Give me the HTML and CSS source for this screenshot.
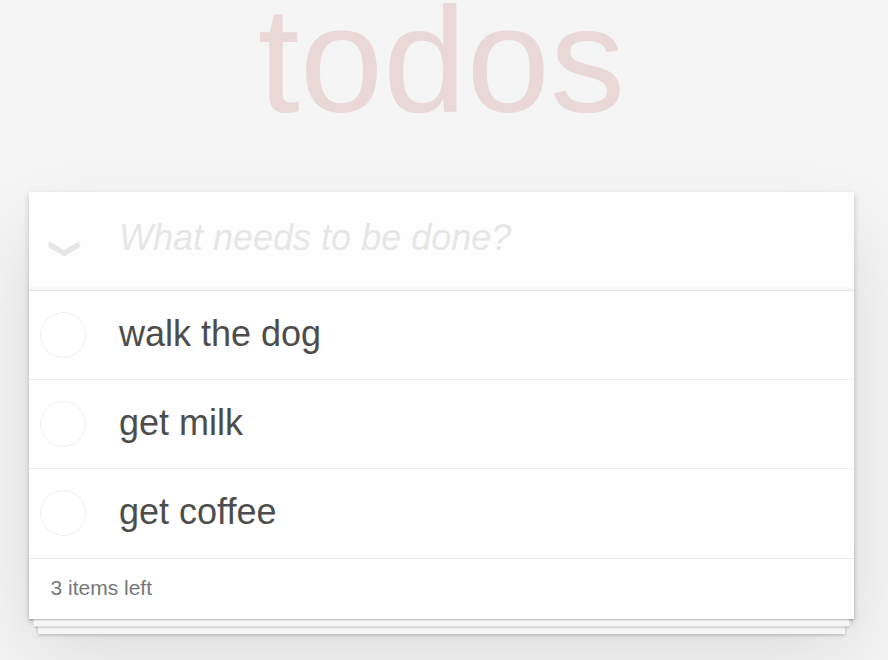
FILE: index.html
```html
<!DOCTYPE html>
<html lang="en">
<head>
<meta charset="utf-8">
<title>todos</title>
<link rel="stylesheet" href="styles.css">
</head>
<body>
<section class="todoapp">
  <header class="header">
    <h1 class="title">todos</h1>
    <div class="new-row">
      <input class="new-todo" placeholder="What needs to be done?">
      <label class="toggle-all"><span class="chev">❯</span></label>
    </div>
  </header>
  <section class="main">
    <ul class="todo-list">
      <li class="todo"><span class="toggle"></span><label class="todo-label">walk the dog</label></li>
      <li class="todo"><span class="toggle"></span><label class="todo-label">get milk</label></li>
      <li class="todo"><span class="toggle"></span><label class="todo-label">get coffee</label></li>
    </ul>
  </section>
  <footer class="footer">
    <span class="todo-count">3 items left</span>
  </footer>
</section>
</body>
</html>
```
FILE: styles.css
```css
html, body {
  margin: 0;
  padding: 0;
}
body {
  background: #f5f5f5;
  font-family: "Liberation Sans", Arial, sans-serif;
  font-size: 21px;
  line-height: 1.4em;
  color: #4d4d4d;
  font-weight: 300;
  -webkit-font-smoothing: antialiased;
}
.todoapp {
  width: 825px;
  margin: 192px 0 60px 29px;
  background: #fff;
  position: relative;
  box-shadow: 0 3px 6px rgba(0,0,0,0.2), 0 37px 75px rgba(0,0,0,0.1);
}
.header {
  position: relative;
}
.title {
  position: absolute;
  top: -192px;
  left: 0;
  width: 100%;
  margin: 0;
  font-size: 150px;
  line-height: 0.8;
  font-weight: 100;
  text-align: center;
  color: rgba(175,47,47,0.15);
  text-rendering: optimizeLegibility;
}
.new-row {
  position: relative;
}
.new-todo {
  display: block;
  box-sizing: border-box;
  width: 100%;
  margin: 0;
  font-family: inherit;
  font-size: 36px;
  line-height: 1.4em;
  height: 98px;
  padding: 21px 24px 27px 90px;
  border: none;
  outline: none;
  background: rgba(0,0,0,0.003);
  box-shadow: inset 0 -3px 1.5px rgba(0,0,0,0.03);
  color: #4d4d4d;
}
.new-todo::placeholder {
  font-style: italic;
  font-weight: 300;
  color: #e6e6e6;
}
.toggle-all {
  position: absolute;
  top: 0;
  left: 0;
  width: 67.5px;
  height: 98px;
  display: flex;
  align-items: center;
  justify-content: center;
}
.chev {
  display: inline-block;
  font-family: "DejaVu Sans", sans-serif;
  font-size: 33px;
  line-height: 1;
  color: #e6e6e6;
  transform: translate(4px, 7px) rotate(90deg) scale(0.85, 0.95);
}
.main {
  border-top: 1.5px solid #e6e6e6;
}
.todo-list {
  margin: 0;
  padding: 0;
  list-style: none;
}
.todo {
  display: flex;
  align-items: center;
  font-size: 36px;
  border-bottom: 1.5px solid #ededed;
}
.toggle {
  flex: none;
  box-sizing: border-box;
  width: 46px;
  height: 46px;
  margin: 0 11px 0 11px;
  border: 1.5px solid #ededed;
  border-radius: 50%;
}
.todo-label {
  padding: 20.5px 22px 24.5px 22px;
  line-height: 1.2;
  color: #4d4d4d;
  word-break: break-all;
}
.footer {
  position: relative;
  color: #777;
  height: 30px;
  padding: 14px 22.5px 16px 21.5px;
  font-size: 21px;
  line-height: 30px;
}
.footer::before {
  content: '';
  position: absolute;
  right: 0;
  bottom: 0;
  left: 0;
  height: 75px;
  overflow: hidden;
  box-shadow: 0 1.5px 1.5px rgba(0,0,0,0.2),
              0 12px 0 -4.5px #f6f6f6,
              0 13.5px 1.5px -4.5px rgba(0,0,0,0.2),
              0 24px 0 -9px #f6f6f6,
              0 25.5px 3px -9px rgba(0,0,0,0.2);
}
.todo-count {
  position: relative;
}
```
